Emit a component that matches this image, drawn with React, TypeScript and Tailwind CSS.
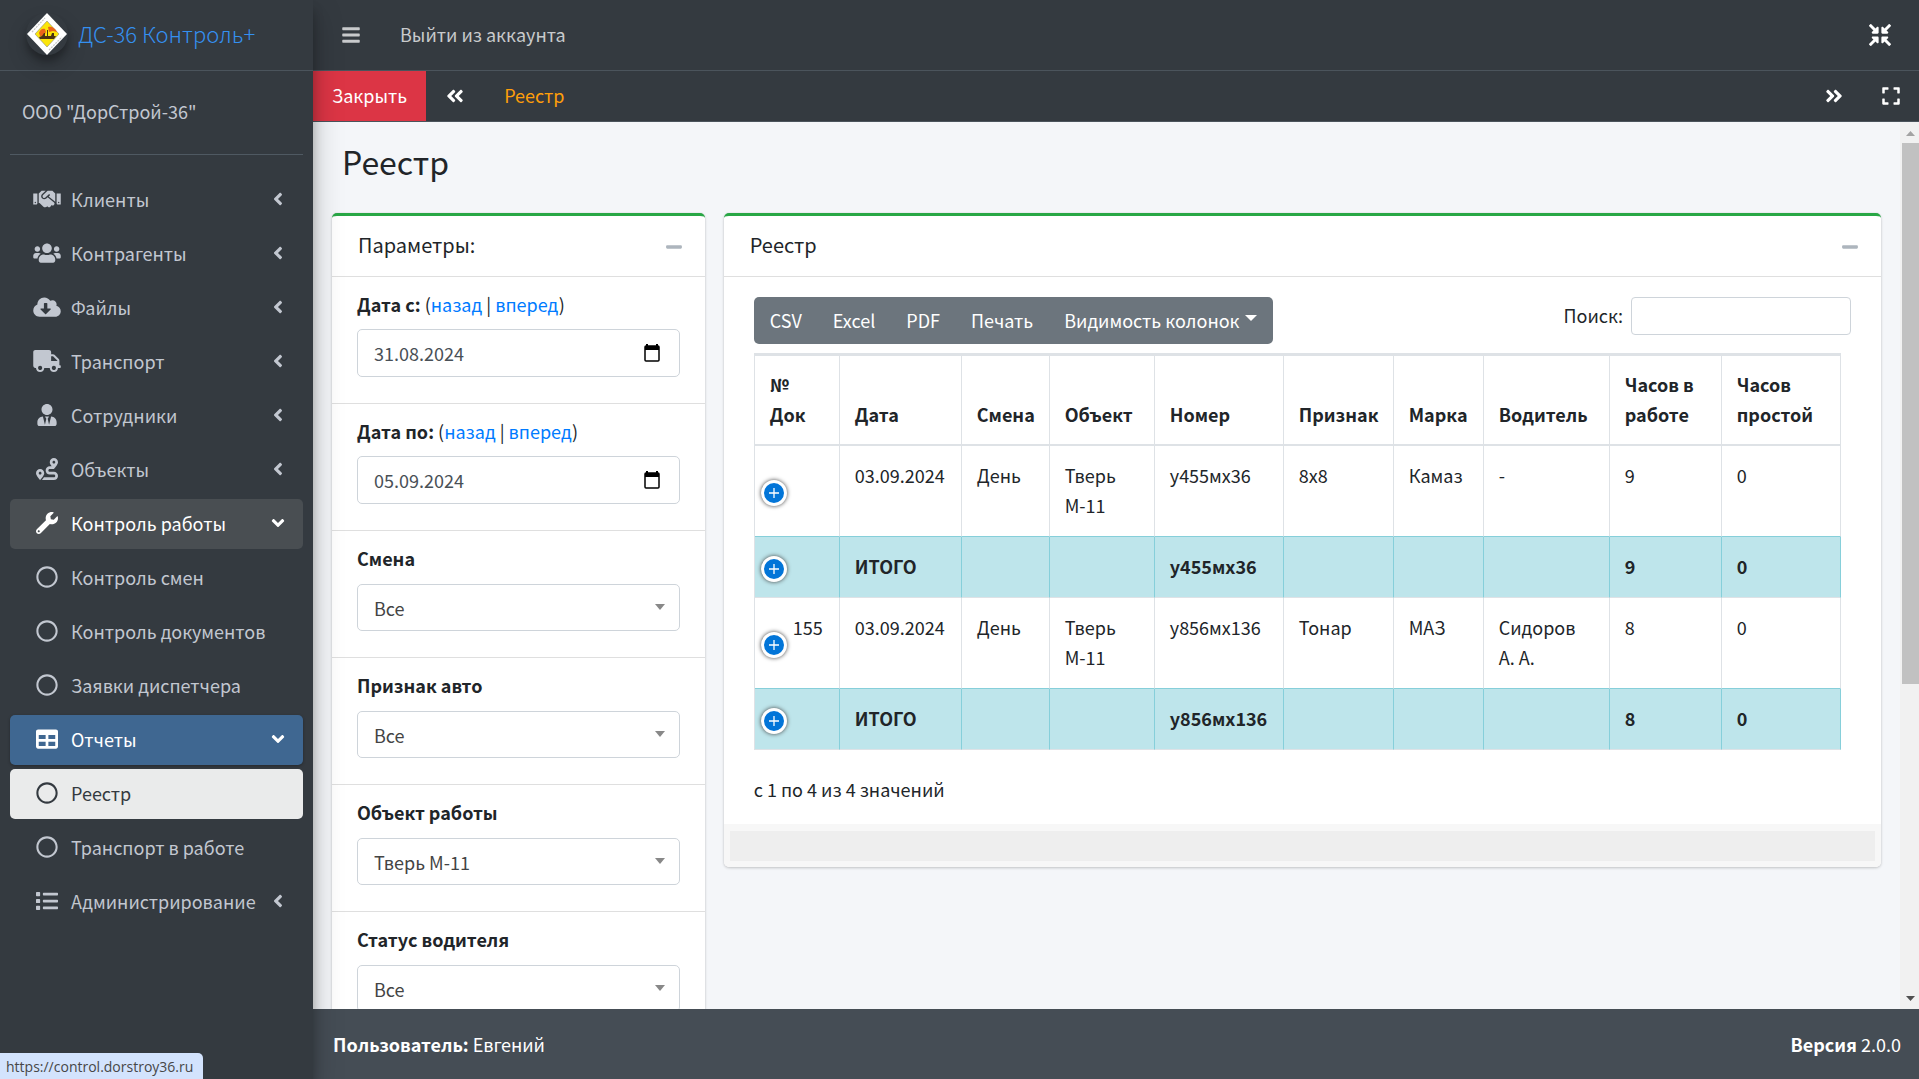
import type { ReactNode } from "react";
import type { IconType } from "react-icons";
import {
  FaAngleDoubleLeft,
  FaAngleDoubleRight,
  FaAngleDown,
  FaAngleLeft,
  FaBars,
  FaCloudDownloadAlt,
  FaCompressArrowsAlt,
  FaExpand,
  FaHandshake,
  FaList,
  FaMinus,
  FaRegCircle,
  FaRoute,
  FaTable,
  FaTruck,
  FaUsers,
  FaUserTie,
  FaWrench,
} from "react-icons/fa";

type MenuItem = {
  label: string;
  icon: IconType;
  state?: "open" | "active" | "current";
  leaf?: boolean;
};

const menu: MenuItem[] = [
  { label: "Клиенты", icon: FaHandshake },
  { label: "Контрагенты", icon: FaUsers },
  { label: "Файлы", icon: FaCloudDownloadAlt },
  { label: "Транспорт", icon: FaTruck },
  { label: "Сотрудники", icon: FaUserTie },
  { label: "Объекты", icon: FaRoute },
  { label: "Контроль работы", icon: FaWrench, state: "open" },
  { label: "Контроль смен", icon: FaRegCircle, leaf: true },
  { label: "Контроль документов", icon: FaRegCircle, leaf: true },
  { label: "Заявки диспетчера", icon: FaRegCircle, leaf: true },
  { label: "Отчеты", icon: FaTable, state: "active" },
  { label: "Реестр", icon: FaRegCircle, state: "current", leaf: true },
  { label: "Транспорт в работе", icon: FaRegCircle, leaf: true },
  { label: "Администрирование", icon: FaList },
];

const columns = [
  { title: "№ Док", width: "w-[85px]" },
  { title: "Дата", width: "w-[122px]" },
  { title: "Смена", width: "w-[88px]" },
  { title: "Объект", width: "w-[105px]" },
  { title: "Номер", width: "w-[129px]" },
  { title: "Признак", width: "w-[110px]" },
  { title: "Марка", width: "w-[90px]" },
  { title: "Водитель", width: "w-[126px]" },
  { title: "Часов в работе", width: "w-[112px]" },
  { title: "Часов простой", width: "w-[119px]" },
];

type Row = { total?: boolean; cells: string[] };

const rows: Row[] = [
  { cells: ["", "03.09.2024", "День", "Тверь М-11", "у455мх36", "8х8", "Камаз", "-", "9", "0"] },
  { total: true, cells: ["", "ИТОГО", "", "", "у455мх36", "", "", "", "9", "0"] },
  { cells: ["155", "03.09.2024", "День", "Тверь М-11", "у856мх136", "Тонар", "МАЗ", "Сидоров А.\u00a0А.", "8", "0"] },
  { total: true, cells: ["", "ИТОГО", "", "", "у856мх136", "", "", "", "8", "0"] },
];

export default function App() {
  return (
    <div className="flex h-screen overflow-hidden bg-[#f4f6f9] font-['Noto_Sans_CJK_SC','Noto_Sans',sans-serif] text-[18px] leading-[30px] text-[#212529]">
      <Sidebar />
      <div className="flex min-w-0 flex-1 flex-col">
        <TopBar />
        <TabBar />
        <div className="flex min-h-0 flex-1">
          <main className="min-w-0 flex-1 overflow-hidden px-[10px]">
            <h1 className="px-[19px] pt-[15px] pb-7 text-[32px] leading-[48px]">Реестр</h1>
            <div className="flex items-start">
              <div className="w-1/4 pr-[10px] pl-[9px]">
                <Filters />
              </div>
              <div className="w-3/4 px-[9px]">
                <Registry />
              </div>
            </div>
          </main>
          <ScrollTrack />
        </div>
        <footer className="flex h-[70px] shrink-0 items-center justify-between bg-[#454d55] pr-[18px] pl-5 text-white">
          <p>
            <b>Пользователь:</b> Евгений
          </p>
          <p>
            <b>Версия</b> 2.0.0
          </p>
        </footer>
      </div>
      <div className="fixed bottom-0 left-0 z-20 h-[26px] rounded-tr-[5px] bg-[#d3e3fd] pr-[10px] pl-[6px] font-['Open_Sans',sans-serif] text-[14px] leading-[28px] text-[#474747]">
        https://control.dorstroy36.ru
      </div>
    </div>
  );
}

function Sidebar() {
  return (
    <aside className="relative z-10 w-[313px] shrink-0 bg-[#343a40] text-[#c2c7d0] shadow-[0_14px_28px_rgba(0,0,0,0.25),0_10px_10px_rgba(0,0,0,0.22)]">
      <a href="#" className="flex h-[71px] items-center gap-[10px] border-b border-[#4b545c] pb-[2px] pl-[26px] text-[22px] font-light text-[#3490f0]">
        <Logo />
        <span className="pb-[2px]">ДС-36 Контроль+</span>
      </a>
      <div className="mx-[10px] flex h-[84px] items-center border-b border-[#4f5962] px-[12px] pb-1">
        <a href="#">ООО "ДорСтрой-36"</a>
      </div>
      <nav className="mt-5 flex flex-col gap-1 px-[10px]">
        {menu.map((item) => (
          <MenuLink key={item.label} item={item} />
        ))}
      </nav>
    </aside>
  );
}

function MenuLink({ item }: { item: MenuItem }) {
  const Icon = item.icon;
  const Arrow = item.state ? FaAngleDown : FaAngleLeft;
  const look =
    item.state === "open"
      ? "bg-[#494e52] text-white"
      : item.state === "active"
      ? "bg-[#3f6791] text-white shadow-[0_1px_3px_rgba(0,0,0,0.3)]"
      : item.state === "current"
      ? "bg-[#eaebeb] text-[#343a40]"
      : "";

  return (
    <a href="#" className={`flex h-[50px] items-center rounded-[5px] pr-[15px] pb-[2px] pl-[23px] ${look}`}>
      <Icon className="mr-[10px] h-[22px] w-[28px]" />
      <span className="flex-1 whitespace-nowrap">{item.label}</span>
      {!item.leaf && <Arrow className="h-5 w-5" />}
    </a>
  );
}

function Logo() {
  return (
    <svg viewBox="0 0 42 42" className="h-[42px] w-[42px] rounded-full shadow-[0_10px_20px_rgba(0,0,0,0.19),0_6px_6px_rgba(0,0,0,0.23)]">
      <path d="M21 0 41 21 21 42 1 21Z" fill="#fff" />
      <path d="M6 19 19 5M23 37 36 24" stroke="#c4c4c4" strokeWidth="1.2" strokeDasharray="2 1" />
      <path d="M21 8 33 21 21 34 9 21Z" fill="#fbe50a" stroke="#8a8a80" strokeWidth=".6" />
      <path d="M13 20c1-4 4-5 6-4l1 3-2 4h-4ZM22 14c4-1 7 1 9 5l-4-1-4 1Z" fill="#e8641a" />
      <path d="M21 17h1v6h3l1-3h2v3h2l-2 3H14l-1-2 3-1 2-3h1v3h2Z" fill="#4a3212" />
    </svg>
  );
}

function TopBar() {
  return (
    <header className="flex h-[71px] shrink-0 items-center border-b border-[#4b545c] bg-[#343a40] pr-7 pl-[28px] text-[#c8cacc]">
      <button type="button" aria-label="Меню" className="mr-[39px]">
        <FaBars className="h-5 w-5" />
      </button>
      <a href="#" className="pb-[2px]">
        Выйти из аккаунта
      </a>
      <button type="button" aria-label="Свернуть" className="ml-auto text-white">
        <FaCompressArrowsAlt className="h-[22px] w-[22px]" />
      </button>
    </header>
  );
}

function TabBar() {
  return (
    <div className="flex h-[51px] shrink-0 items-center border-b border-[#4b545c] bg-[#343a40] pr-[18px] text-white">
      <button type="button" className="h-full bg-[#dc3545] px-[19px] pb-[2px]">
        Закрыть
      </button>
      <button type="button" aria-label="Назад" className="px-[19px]">
        <FaAngleDoubleLeft className="h-5 w-5" />
      </button>
      <a href="#" className="ml-5 pb-[2px] text-[#ff9f0a]">
        Реестр
      </a>
      <button type="button" aria-label="Вперед" className="ml-auto px-[19px]">
        <FaAngleDoubleRight className="h-5 w-5" />
      </button>
      <button type="button" aria-label="На весь экран" className="ml-[18px]">
        <FaExpand className="h-5 w-5" />
      </button>
    </div>
  );
}

function Card({ title, children }: { title: string; children: ReactNode }) {
  return (
    <section className="rounded-[5px] border-t-[3px] border-[#28a745] bg-white shadow-[0_0_1px_rgba(0,0,0,0.13),0_1px_3px_rgba(0,0,0,0.2)]">
      <div className="flex h-[61px] items-center justify-between border-b border-[#dfdfdf] pr-[22px] pl-[26px]">
        <h2 className="pb-[2px] text-[20px]">{title}</h2>
        <button type="button" aria-label="Свернуть" className="pt-[2px] text-[#adb5bd]">
          <FaMinus className="h-[18px] w-[18px]" />
        </button>
      </div>
      {children}
    </section>
  );
}

function Filters() {
  return (
    <Card title="Параметры:">
      <DateField id="from" label="Дата с:" value="31.08.2024" />
      <DateField id="to" label="Дата по:" value="05.09.2024" />
      <SelectField id="shift" label="Смена" value="Все" />
      <SelectField id="type" label="Признак авто" value="Все" />
      <SelectField id="place" label="Объект работы" value="Тверь М-11" />
      <SelectField id="status" label="Статус водителя" value="Все" />
    </Card>
  );
}

function DateField({ id, label, value }: { id: string; label: string; value: string }) {
  return (
    <div className="border-b border-[#dfdfdf] px-[25px] pt-3 pb-[26px]">
      <div className="mb-[10px]">
        <label htmlFor={id} className="font-bold">
          {label}
        </label>{" "}
        (
        <a href="#" className="text-[#007bff]">
          назад
        </a>{" "}
        |{" "}
        <a href="#" className="text-[#007bff]">
          вперед
        </a>
        )
      </div>
      <div className="flex h-12 items-center rounded-[5px] border border-[#ced4da] pr-[17px] pl-4 text-[#495057]">
        <input id={id} type="text" defaultValue={value} className="min-w-0 flex-1 outline-none" />
        <button type="button" aria-label="Календарь">
          <svg viewBox="0 0 20 20" className="h-5 w-5">
            <path d="M5 1v3M15 1v3" stroke="#000" strokeWidth="2" />
            <rect x="3" y="3" width="14" height="15" rx="1" fill="none" stroke="#000" strokeWidth="1.5" />
            <path d="M3 3h14v4H3Z" />
          </svg>
        </button>
      </div>
    </div>
  );
}

function SelectField({ id, label, value }: { id: string; label: string; value: string }) {
  return (
    <div className="border-b border-[#dfdfdf] px-[25px] pt-3 pb-[26px]">
      <label htmlFor={id} className="mb-[11px] block font-bold">
        {label}
      </label>
      <div className="relative">
        <select id={id} className="block h-[47px] w-full appearance-none rounded-[5px] border border-[#ced4da] px-4 text-[#444]">
          <option>{value}</option>
        </select>
        <svg viewBox="0 0 10 6" className="pointer-events-none absolute top-5 right-[15px] h-[6px] w-[10px]">
          <path d="M0 0h10L5 6Z" fill="#888" />
        </svg>
      </div>
    </div>
  );
}

function Registry() {
  return (
    <Card title="Реестр">
      <div className="px-[30px] pt-5">
        <div className="flex items-start justify-between">
          <div className="flex h-[47px] rounded-[5px] bg-[#6c757d] pl-px text-white">
            <ToolButton>CSV</ToolButton>
            <ToolButton>Excel</ToolButton>
            <ToolButton>PDF</ToolButton>
            <ToolButton>Печать</ToolButton>
            <ToolButton>
              Видимость колонок
              <svg viewBox="0 0 12 6" className="mb-1 ml-[5px] h-[6px] w-3">
                <path d="M0 0h12L6 6Z" fill="#fff" />
              </svg>
            </ToolButton>
          </div>
          <div className="flex items-center gap-2">
            <label htmlFor="search" className="pb-[2px]">
              Поиск:
            </label>
            <input id="search" type="search" className="h-[38px] w-[220px] rounded-[4px] border border-[#ced4da] px-2" />
          </div>
        </div>
        <div className="mt-[9px] pr-[11px]">
          <RegistryTable />
        </div>
        <p className="pt-6 pb-5">с 1 по 4 из 4 значений</p>
      </div>
      <div className="rounded-b-[5px] bg-[#f7f7f7] p-[6px] pt-[7px]">
        <div className="h-[30px] bg-[#eee]" />
      </div>
    </Card>
  );
}

function ToolButton({ children }: { children: ReactNode }) {
  return (
    <button type="button" className="-ml-px flex items-center px-4 pb-[2px] whitespace-nowrap">
      {children}
    </button>
  );
}

function RegistryTable() {
  return (
    <table className="w-full table-fixed border-separate border-spacing-0 border-t-[3px] border-l border-[#dee2e6] text-left">
      <thead>
        <tr>
          {columns.map((column) => (
            <th
              key={column.title}
              className={`border-r border-b-2 border-[#dee2e6] px-[15px] pt-[13px] pb-[15px] align-bottom font-bold ${column.width}`}
            >
              {column.title}
            </th>
          ))}
        </tr>
      </thead>
      <tbody>
        {rows.map((row, i) => (
          <tr key={i} className={row.total ? "bg-[#bee5eb] font-bold" : ""}>
            {row.cells.map((cell, j) => (
              <td
                key={j}
                className={`relative border-r border-b pt-[14px] pb-4 align-top ${j === 0 ? "pl-[38px]" : "pr-3 pl-[15px]"} ${
                  row.total ? "border-r-[#86cfda] border-b-[#dee2e6]" : "border-r-[#dee2e6] border-b-[#86cfda]"
                }`}
              >
                {j === 0 && <ExpandButton />}
                {cell}
              </td>
            ))}
          </tr>
        ))}
      </tbody>
    </table>
  );
}

function ExpandButton() {
  return (
    <button
      type="button"
      aria-label="Подробнее"
      className="absolute top-1/2 left-[6px] -mt-[11px] h-[26px] w-[26px] rounded-full border-[3px] border-white bg-[#0275d8] shadow-[0_0_4px_#444]"
    >
      <svg viewBox="0 0 20 20" className="h-5 w-5">
        <path d="M10 5v10M5 10h10" stroke="#fff" strokeWidth="1.3" />
      </svg>
    </button>
  );
}

function ScrollTrack() {
  return (
    <div className="flex w-[19px] shrink-0 flex-col items-center bg-[#f1f1f1]" aria-hidden="true">
      <svg viewBox="0 0 19 21" className="h-[21px] w-[19px]">
        <path d="M6 14h9L10.5 9Z" fill="#a3a3a3" />
      </svg>
      <div className="flex-1 self-stretch pl-[2px]">
        <div className="h-[64%] bg-[#c1c1c1]" />
      </div>
      <svg viewBox="0 0 19 21" className="h-[21px] w-[19px]">
        <path d="M6 8h9l-4.5 5Z" fill="#505050" />
      </svg>
    </div>
  );
}
